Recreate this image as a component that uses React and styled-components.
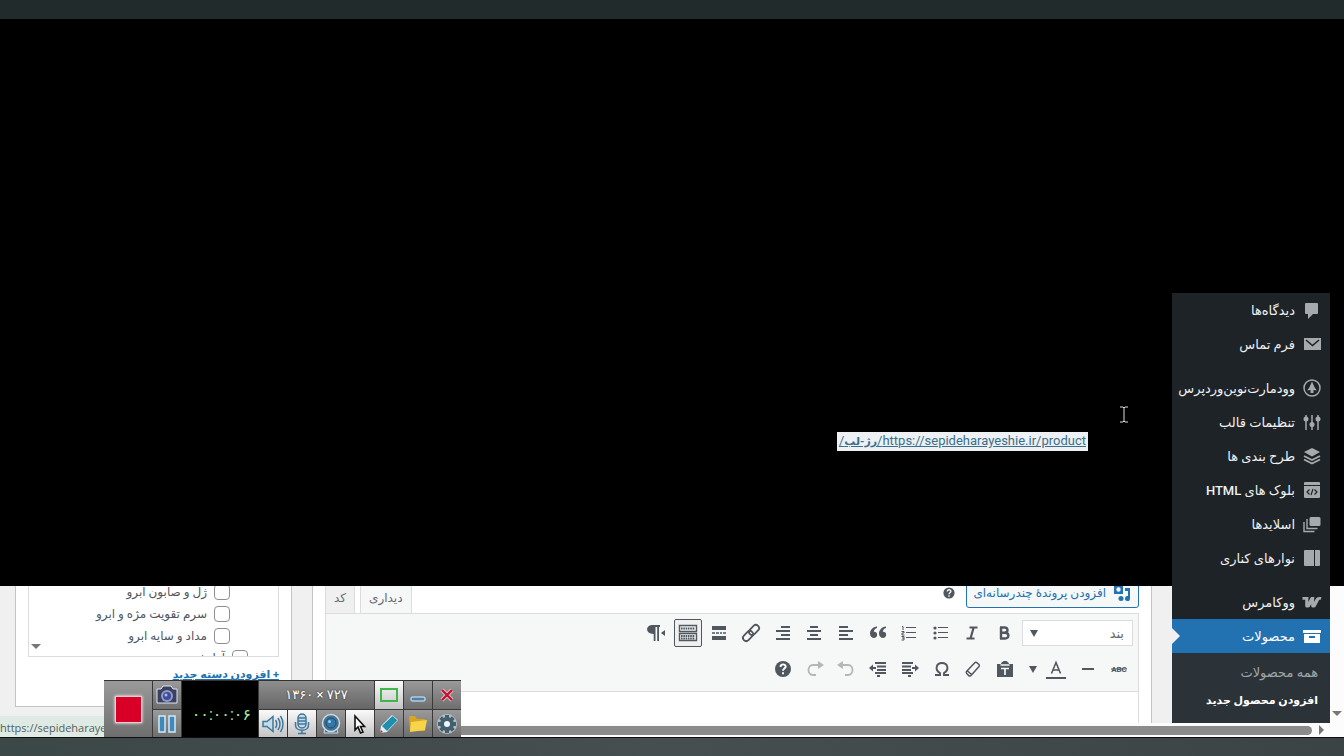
import styled, { createGlobalStyle, css } from 'styled-components';

const GlobalStyle = createGlobalStyle`
      * {
            box-sizing: border-box;
      }
      body {
            margin: 0;
            background: #000;
            font-family: Roboto, 'DejaVu Sans', sans-serif;
            font-size: 13px;
      }
      button, input, select {
            font: inherit;
            margin: 0;
      }
`;

const Desktop = styled.div`
      position: relative;
      direction: rtl;
      display: flex;
      flex-direction: column;
      min-height: 100vh;
      overflow: hidden;
`;

const TopBar = styled.div`
      height: 19px;
      background: #222b2c;
`;

const BottomBar = styled.div`
      height: 19px;
      border-top: 1px solid #0c0f10;
      background: linear-gradient(90deg, #3c4748, #474e4f 50%, #3b4344);
`;

const Screen = styled.div`
      flex: 1;
      display: grid;
      grid-template-columns: 14px 158px minmax(0, 1fr);
`;

const ScrollColumn = styled.div`
      display: flex;
      flex-direction: column;
      justify-content: flex-end;
`;

const ScrollTrack = styled.div`
      display: flex;
      align-items: flex-end;
      justify-content: center;
      height: 137px;
      padding-bottom: 7px;
      background: #fcfcfc;
`;

const Triangle = styled.span`
      border: 5px solid transparent;
      ${({ $side }) =>
            $side === 'right'
                  ? css`
                          border-left-color: #777;
                          border-right-width: 0;
                    `
                  : css`
                          border-top-color: #777;
                          border-bottom-width: 0;
                    `}
`;

const DropArrow = styled.span`
      border: 4px solid transparent;
      border-top: 7px solid #50575e;
      border-bottom-width: 0;
`;

/* admin menu */

const Sidebar = styled.nav`
      align-self: end;
      background: #1d2327;
`;

const MenuLink = styled.a`
      position: relative;
      display: flex;
      align-items: center;
      gap: 7px;
      height: 34px;
      padding-right: 8px;
      color: ${({ $active }) => ($active ? '#fff' : '#f0f0f1')};
      background: ${({ $active }) => ($active ? '#2271b1' : 'transparent')};
      font-size: 13px;
      font-weight: 500;
      text-decoration: none;
      white-space: nowrap;

      svg {
            flex: none;
            color: ${({ $active }) => ($active ? '#fff' : '#a7aaad')};
      }

      ${({ $active }) =>
            $active &&
            css`
                  &::after {
                        content: '';
                        position: absolute;
                        left: 0;
                        top: 9px;
                        border: 8px solid transparent;
                        border-left-color: #f0f0f1;
                        border-right-width: 0;
                  }
            `}
`;

const Separator = styled.div`
      height: 10px;
`;

const SubMenu = styled.div`
      padding: 6px 12px 8px;
      background: #2c3338;
`;

const SubLink = styled.a`
      display: block;
      height: 28px;
      line-height: 28px;
      color: ${({ $current }) => ($current ? '#fff' : '#a0a6aa')};
      font-weight: ${({ $current }) => ($current ? 700 : 400)};
      font-size: ${({ $current }) => ($current ? '11px' : '13px')};
      text-decoration: none;
      white-space: nowrap;
`;

/* page */

const Main = styled.main`
      display: flex;
      flex-direction: column;
      min-width: 0;
`;

const Blank = styled.div`
      position: relative;
      flex: 1;
      display: flex;
      align-items: flex-end;
      padding: 0 84px 135px;
`;

const Permalink = styled.a`
      height: 19px;
      padding: 0 2px;
      background: #eef1f3;
      color: #3c6e8c;
      line-height: 18px;
      white-space: nowrap;

      b {
            font-size: 11px;
      }
`;

const TextCursor = styled.svg`
      position: absolute;
      right: 44px;
      bottom: 163px;
`;

const PageStrip = styled.div`
      display: flex;
      gap: 20px;
      height: 137px;
      padding: 0 20px 0 15px;
      overflow: hidden;
      background: #f0f0f1;
`;

const EditorBox = styled.section`
      flex: 1;
      min-width: 0;
      padding: 0 12px;
      border: solid #c3c4c7;
      border-width: 0 1px;
      background: #fff;
`;

const EditorTools = styled.div`
      display: flex;
      align-items: flex-end;
      gap: 10px;
      height: 27px;
      overflow: hidden;
`;

const MediaButton = styled.button`
      display: flex;
      flex: none;
      align-items: center;
      gap: 6px;
      height: 30px;
      margin-bottom: 5px;
      padding: 0 6px;
      border: 1px solid #2271b1;
      border-radius: 3px;
      background: #f6f7f7;
      color: #2271b1;
      font-size: 12px;
      white-space: nowrap;
`;

const HelpMark = styled.span`
      display: flex;
      height: 30px;
      align-items: center;
      margin-bottom: 5px;
      color: #50575e;
`;

const Tabs = styled.div`
      display: flex;
      align-items: flex-end;
      gap: 5px;
      margin-right: auto;
`;

const Tab = styled.button`
      height: 32px;
      padding: 0 8px;
      border: solid #dcdcde;
      border-width: 1px 1px 0;
      background: ${({ $selected }) => ($selected ? '#f6f7f7' : '#f0f0f1')};
      color: #646970;
      font-size: 12px;
      white-space: nowrap;
`;

const Editor = styled.div`
      height: 110px;
      border: solid #dcdcde;
      border-width: 1px 1px 0;
      background: #fff;
`;

const Toolbar = styled.div`
      display: flex;
      flex-direction: column;
      gap: 8px;
      padding: 5px 5px 8px;
      border-bottom: 1px solid #dcdcde;
      background: #f6f7f7;
`;

const ToolRow = styled.div`
      display: flex;
      align-items: center;
      gap: ${({ $gap }) => $gap}px;
      height: 28px;
`;

const ToolGroup = styled.div`
      display: flex;
      justify-content: space-between;
      width: ${({ $width }) => $width}px;
`;

const ToolButton = styled.button`
      display: flex;
      align-items: center;
      justify-content: center;
      width: 28px;
      height: 28px;
      padding: 0;
      border: 1px solid ${({ $pressed }) => ($pressed ? '#50575e' : 'transparent')};
      border-radius: 2px;
      background: ${({ $pressed }) => ($pressed ? '#f0f0f1' : 'transparent')};
      color: ${({ $faded }) => ($faded ? '#b4b6b8' : '#50575e')};
`;

const SplitArrow = styled.button`
      display: flex;
      align-items: center;
      width: 21px;
      height: 28px;
      padding: 0 4px 0 0;
      border: 0;
      background: transparent;
`;

const FormatBox = styled.div`
      position: relative;
      width: 111px;
`;

const FormatSelect = styled.select`
      appearance: none;
      width: 100%;
      height: 26px;
      padding: 0 8px;
      border: 1px solid #dcdcde;
      border-radius: 0;
      background: #fff;
      color: #646970;
      font-size: 13px;
`;

const FormatArrow = styled.span`
      position: absolute;
      left: 8px;
      top: 10px;
      display: flex;
`;

/* categories */

const CategoryBox = styled.section`
      width: 277px;
      height: 121px;
      padding: 0 12px;
      border: solid #c3c4c7;
      border-width: 0 1px 1px;
      background: #fff;
`;

const CategoryList = styled.div`
      position: relative;
      height: 77px;
      margin-top: -6px;
      border: 1px solid #dcdcde;
      overflow: hidden;
`;

const CategoryLabel = styled.label`
      display: flex;
      align-items: center;
      gap: 7px;
      height: 22px;
      padding-right: ${({ $top }) => ($top ? '30px' : '48px')};
      color: #50575e;
      font-size: 12px;
      white-space: nowrap;
`;

const Checkbox = styled.input`
      appearance: none;
      width: 16px;
      height: 16px;
      border: 1px solid #8c8f94;
      border-radius: 4px;
      background: #fff;
`;

const ListArrow = styled.span`
      position: absolute;
      left: 2px;
      bottom: 7px;
      display: flex;
`;

const AddCategory = styled.a`
      display: block;
      margin-top: 6px;
      color: #2271b1;
      font-size: 11px;
      font-weight: 700;
      line-height: 24px;
`;

const BottomScroll = styled.div`
      display: flex;
      align-items: center;
      gap: 7px;
      height: 14px;
      padding-right: 20px;
      background: #fcfcfc;
`;

const ScrollThumb = styled.div`
      flex: 1;
      height: 9px;
      border-radius: 5px;
      background: #8b8b8b;
`;

const StatusBubble = styled.div`
      position: absolute;
      left: 0;
      bottom: 19px;
      width: 200px;
      height: 21px;
      direction: ltr;
      background: #dfeae5;
      color: #50605c;
      font-family: 'Open Sans', sans-serif;
      font-size: 11px;
      line-height: 23px;
`;

/* screen recorder */

const Recorder = styled.div`
      position: absolute;
      left: 104px;
      bottom: 19px;
      display: grid;
      direction: ltr;
      grid-template-columns: 48px 28px 76px repeat(7, 28px);
      grid-template-rows: 28px 27px;
      gap: 1px;
      border-top: 1px solid #333;
      background: #3a3a3a;
`;

const RecButton = styled.button`
      display: flex;
      align-items: center;
      justify-content: center;
      grid-row: ${({ $tall }) => ($tall ? 'span 2' : 'auto')};
      padding: 0;
      border: 0;
      background: ${({ $light }) =>
            $light ? 'linear-gradient(#fafafa, #c4c4c4)' : 'linear-gradient(#9a9a9a, #6e6e6e)'};
`;

const RecordSquare = styled.span`
      width: 27px;
      height: 27px;
      border: 1px solid #f3c9d0;
      background: #d80027;
      box-shadow: 0 0 3px #fff;
`;

const Timer = styled.div`
      grid-row: span 2;
      padding: 11px 7px 0 0;
      background: #000;
      color: #a5eb9a;
      font-size: 16px;
      line-height: 45px;
      text-align: right;
`;

const SizeLabel = styled.div`
      grid-column: span 4;
      background: linear-gradient(#8e8e8e, #666);
      color: #fff;
      font-size: 13px;
      line-height: 28px;
      text-align: center;
      text-shadow: 0 0 2px #222;
`;

const Icon = ({ size = 20, children }) => (
      <svg width={size} height={size} viewBox="0 0 20 20" fill="currentColor" aria-hidden="true">
            {children}
      </svg>
);

const Lines = ({ d, width = 2 }) => (
      <path d={d} fill="none" stroke="currentColor" strokeWidth={width} />
);

const MENU = [
      {
            text: 'دیدگاه‌ها',
            icon: <path d="M4 3h11q1 0 1 1v9q0 1-1 1h-4l-5 5v-5H4q-1 0-1-1V4q0-1 1-1z" />,
      },
      {
            text: 'فرم تماس',
            icon: (
                  <>
                        <path d="M2 4h17v12H2z" />
                        <path d="M4 6l6.500 5.500L17 6" fill="none" stroke="#1d2327" strokeWidth="1.600" />
                  </>
            ),
      },
      null,
      {
            text: 'وودمارت‌نوین‌وردپرس',
            icon: (
                  <>
                        <circle cx="10" cy="10" r="8" fill="none" stroke="currentColor" strokeWidth="1.500" />
                        <path d="M10 3.500q2 5.500 4.800 9l-3.300-.5v3h-3v-3l-3.300.5Q8 9 10 3.500z" />
                  </>
            ),
      },
      {
            text: 'تنظیمات قالب',
            icon: (
                  <>
                        <Lines d="M4 3v15M10 3v15M16 3v15" width={1.5} />
                        <circle cx="4" cy="7" r="2.500" />
                        <circle cx="10" cy="12.500" r="2.500" />
                        <circle cx="16" cy="7" r="2.500" />
                  </>
            ),
      },
      {
            text: 'طرح بندی ها',
            icon: (
                  <>
                        <path d="M10 2l8 4-8 4.500L2 6z" />
                        <Lines d="M2 10l8 4 8-4M2 13.500l8 4 8-4" width={1.8} />
                  </>
            ),
      },
      {
            text: 'بلوک های HTML',
            icon: (
                  <>
                        <path d="M3 2h14q1 0 1 1v2H2V3q0-1 1-1zM2 6h16v11q0 1-1 1H3q-1 0-1-1z" />
                        <path
                              d="M7.500 9.500L5 12l2.500 2.500M12.500 9.500L15 12l-2.500 2.500M11 9l-2 6"
                              fill="none"
                              stroke="#1d2327"
                              strokeWidth="1.200"
                        />
                  </>
            ),
      },
      {
            text: 'اسلایدها',
            icon: (
                  <>
                        <rect x="7.500" y="3" width="11" height="9" rx="1.500" />
                        <Lines d="M5 5v9.500H15.500M2 8v9.500H12.500" width={1.4} />
                  </>
            ),
      },
      {
            text: 'نوارهای کناری',
            icon: <path d="M2 3q0-1 1-1h9v16H3q-1 0-1-1zM13 2h4q1 0 1 1v14q0 1-1 1h-4z" />,
      },
      null,
      {
            text: 'ووکامرس',
            icon: (
                  <path
                        d="M.500 5H6.500l-.3 5L9 5h3.300l-.3 5 1.800-3.200Q15 5 17 5h2.500l-.8 2.800h-1.500l-3.500 6.600q-.6 1-1.800 1H10.500q-1.300 0-1.300-1.400V12l-1.300 2.400q-.6 1-1.800 1H4.500q-1.300 0-1.300-1.400V7.800H.500z"
                  />
            ),
      },
      {
            text: 'محصولات',
            active: true,
            icon: <path d="M1 4h18v3H1zM2 8h16v9H2zM7 10v2h6v-2z" fillRule="evenodd" />,
      },
];

const QUESTION = (
      <>
            <circle cx="10" cy="10" r="8" />
            <path
                  d="M7.500 8c0-3.500 5.200-3.300 5.200-.4 0 2-2.700 2-2.700 4.100M10 13.200v2"
                  fill="none"
                  stroke="#fff"
                  strokeWidth="1.900"
            />
      </>
);

const ROW_ONE = [
      {
            name: 'پررنگ',
            icon: (
                  <Lines
                        d="M7 4v12M6 4.500h4.500c4 0 4 5.200 0 5.200H7h4c4.500 0 4.500 5.800 0 5.800H6"
                        width={2.4}
                  />
            ),
      },
      { name: 'کج', icon: <Lines d="M7.500 4.500h8M4.500 15.500h8M11.800 4L8.300 16" width={2.2} /> },
      {
            name: 'فهرست نشانه‌دار',
            icon: (
                  <>
                        <Lines d="M7 4.500h10M7 9.500h10M7 14.500h10" width={1} />
                        <circle cx="4" cy="5" r="1.600" />
                        <circle cx="4" cy="10" r="1.600" />
                        <circle cx="4" cy="15" r="1.600" />
                  </>
            ),
      },
      {
            name: 'فهرست شماره‌دار',
            icon: (
                  <>
                        <Lines d="M7 4.500h10M7 9.500h10M7 14.500h10" width={1} />
                        <Lines d="M3 3.500h1V7M2.500 8.500h2.500v1.500H3v2h2.500M2.500 13.500H5v3.500H2.500M3 15h2" width={1} />
                  </>
            ),
      },
      {
            name: 'نقل قول',
            icon: (
                  <path d="M9 5c-2 .5-3 2-3.200 3.800 1.900-.2 3.400 1 3.400 3 0 4.500-7.200 4.300-7.200-1.300C2 7 4.600 4 9 3.500zM18 5c-2 .5-3 2-3.200 3.800 1.900-.2 3.400 1 3.400 3 0 4.500-7.200 4.300-7.200-1.300C11 7 13.600 4 18 3.500z" />
            ),
      },
      { name: 'چپ‌چین', icon: <Lines d="M3 4h9M3 8h14M3 12h9M3 16h14" /> },
      { name: 'وسط‌چین', icon: <Lines d="M6 4h8M3 8h14M6 12h8M3 16h14" /> },
      { name: 'راست‌چین', icon: <Lines d="M8 4h9M3 8h14M8 12h9M3 16h14" /> },
      {
            name: 'پیوند',
            icon: (
                  <g transform="rotate(-45 10 10)" fill="none" stroke="currentColor" strokeWidth="1.800">
                        <rect x="0" y="6.800" width="11.500" height="6.400" rx="3.200" />
                        <rect x="8.500" y="6.800" width="11.500" height="6.400" rx="3.200" />
                  </g>
            ),
      },
      {
            name: 'ادامه مطلب',
            icon: (
                  <>
                        <path d="M3 3h14v4H3zM3 13h14v4H3z" />
                        <Lines d="M3 10h3M7 10h3M11 10h2M14 10h3" width={1.6} />
                  </>
            ),
      },
      {
            name: 'نوار ابزار',
            pressed: true,
            icon: (
                  <>
                        <path
                              d="M1.500 2.500h17v6h-17zM1.500 10.500h17v7h-17z"
                              fill="none"
                              stroke="currentColor"
                              strokeWidth="1.400"
                        />
                        <path
                              d="M3 5.500h14M3 13h14M3 15.500h14"
                              fill="none"
                              stroke="currentColor"
                              strokeWidth="1.800"
                              strokeDasharray="1.600 .7"
                        />
                  </>
            ),
      },
      {
            name: 'جهت متن',
            icon: (
                  <>
                        <path d="M7 2h7v2h-1v14h-1.800V4H9.500v14H7.700v-7C-1 11-1 2 7 2z" />
                        <path d="M19 7v6l-4-3z" />
                  </>
            ),
      },
];

const ROW_TWO_START = [
      {
            name: 'خط‌خورده',
            icon: (
                  <>
                        <text x="10" y="13" fontSize="8" fontWeight="700" textAnchor="middle">
                              ABC
                        </text>
                        <Lines d="M2 10h16" width={1} />
                  </>
            ),
      },
      { name: 'خط افقی', icon: <Lines d="M4 10h12" /> },
      {
            name: 'رنگ متن',
            icon: (
                  <>
                        <Lines d="M5.500 14.500L10 3.500l4.500 11M7 11h6" width={1.6} />
                        <path d="M0 18h20v2H0z" />
                  </>
            ),
      },
];

const ROW_TWO_END = [
      {
            name: 'چسباندن متن',
            icon: (
                  <>
                        <path d="M2 5h4c0-2 2-2 2.500-3h3c.5 1 2.500 1 2.500 3h4v13H2z" />
                        <path d="M5.500 6h9M6 9.500h8M10 9v7" fill="none" stroke="#f6f7f7" strokeWidth="1.700" />
                  </>
            ),
      },
      {
            name: 'پاک کردن قالب',
            icon: (
                  <Lines
                        d="M3.500 12.500l8-8.500q1-1 2-.5l2.500 2q.8.8 0 2l-8 9q-1 1-2 .3L3.700 14.500q-.8-1-.2-2zM4 11.500l4.500 4"
                        width={1.5}
                  />
            ),
      },
      {
            name: 'نویسه ویژه',
            icon: <Lines d="M3 16h5v-2C2.500 11 4 4 10 4s7.500 7 2 10v2h5" width={1.9} />,
      },
      {
            name: 'کاهش تورفتگی',
            icon: (
                  <>
                        <Lines d="M2 4h11M2 7.500h9M2 11h9M2 14h11M8 17h3" width={1.8} />
                        <path d="M12 8h3V5.500L19 9l-4 3.500V10h-3z" />
                  </>
            ),
      },
      {
            name: 'افزایش تورفتگی',
            icon: (
                  <>
                        <Lines d="M7 4h11M9 7.500h9M9 11h9M7 14h11M9 17h3" width={1.8} />
                        <path d="M8 8H5V5.500L1 9l4 3.500V10h3z" />
                  </>
            ),
      },
      {
            name: 'واگرد',
            faded: true,
            icon: (
                  <>
                        <Lines d="M6 6h6c6 0 6 10 0 10H9" width={1.8} />
                        <path d="M1 6l6-4v8z" />
                  </>
            ),
      },
      {
            name: 'ازنو',
            faded: true,
            icon: (
                  <>
                        <Lines d="M14 6H8c-6 0-6 10 0 10h3" width={1.8} />
                        <path d="M19 6l-6-4v8z" />
                  </>
            ),
      },
      { name: 'راهنما', icon: QUESTION },
];

const CATEGORIES = ['ژل و صابون ابرو', 'سرم تقویت مژه و ابرو', 'مداد و سایه ابرو'];

const RecIcon = ({ children }) => (
      <svg width="24" height="24" viewBox="0 0 24 24" aria-hidden="true">
            {children}
      </svg>
);

const GEAR_TEETH = [0, 45, 90, 135, 180, 225, 270, 315];

const ToolButtons = ({ items }) =>
      items.map(({ name, icon, pressed, faded }) => (
            <ToolButton key={name} aria-label={name} $pressed={pressed} $faded={faded}>
                  <Icon>{icon}</Icon>
            </ToolButton>
      ));

const AdminMenu = () => (
      <Sidebar>
            {MENU.map((item, i) =>
                  item ? (
                        <MenuLink key={i} href="#" $active={item.active}>
                              <Icon>{item.icon}</Icon>
                              {item.text}
                        </MenuLink>
                  ) : (
                        <Separator key={i} />
                  )
            )}
            <SubMenu>
                  <SubLink href="#">همه محصولات</SubLink>
                  <SubLink href="#" $current>
                        افزودن محصول جدید
                  </SubLink>
            </SubMenu>
      </Sidebar>
);

const ContentEditor = () => (
      <EditorBox>
            <EditorTools>
                  <MediaButton>
                        <Icon>
                              <path
                                    d="M2 2h2l1-1h3l1 1h2v9H2zM6.500 4.300a2.200 2.200 0 100 4.400 2.200 2.200 0 000-4.400z"
                                    fillRule="evenodd"
                              />
                              <path d="M13 5h5v10.500a2.500 2.500 0 11-2-2.400V8h-3z" />
                              <circle cx="9" cy="15.500" r="2.500" />
                        </Icon>
                        افزودن پروندهٔ چندرسانه‌ای
                  </MediaButton>
                  <HelpMark>
                        <Icon size={14}>{QUESTION}</Icon>
                  </HelpMark>
                  <Tabs>
                        <Tab $selected>دیداری</Tab>
                        <Tab>کد</Tab>
                  </Tabs>
            </EditorTools>
            <Editor>
                  <Toolbar>
                        <ToolRow $gap={4}>
                              <FormatBox>
                                    <FormatSelect aria-label="قالب">
                                          <option>بند</option>
                                    </FormatSelect>
                                    <FormatArrow>
                                          <DropArrow />
                                    </FormatArrow>
                              </FormatBox>
                              <ToolGroup $width={376}>
                                    <ToolButtons items={ROW_ONE} />
                              </ToolGroup>
                        </ToolRow>
                        <ToolRow $gap={1}>
                              <ToolGroup $width={91}>
                                    <ToolButtons items={ROW_TWO_START} />
                              </ToolGroup>
                              <SplitArrow aria-label="رنگ‌ها">
                                    <DropArrow />
                              </SplitArrow>
                              <ToolGroup $width={250}>
                                    <ToolButtons items={ROW_TWO_END} />
                              </ToolGroup>
                        </ToolRow>
                  </Toolbar>
            </Editor>
      </EditorBox>
);

const Categories = () => (
      <CategoryBox>
            <CategoryList>
                  {CATEGORIES.map((name) => (
                        <CategoryLabel key={name}>
                              <Checkbox type="checkbox" />
                              {name}
                        </CategoryLabel>
                  ))}
                  <CategoryLabel $top>
                        <Checkbox type="checkbox" />
                        آرایش صورت
                  </CategoryLabel>
                  <ListArrow>
                        <Triangle />
                  </ListArrow>
            </CategoryList>
            <AddCategory href="#">+ افزودن دسته جدید</AddCategory>
      </CategoryBox>
);

const RecorderPanel = () => (
      <Recorder>
            <RecButton $tall aria-label="توقف">
                  <RecordSquare />
            </RecButton>
            <RecButton aria-label="عکس">
                  <RecIcon>
                        <path d="M2 6h4l2-3h8l2 3h4v14H2z" fill="#39415f" stroke="#dfe6f2" />
                        <circle cx="12" cy="13" r="6" fill="#8f9bc9" />
                        <circle cx="12" cy="13" r="4" fill="#3f4d9a" />
                        <circle cx="11" cy="12" r="1.500" fill="#aab8ec" />
                  </RecIcon>
            </RecButton>
            <Timer>۰۰:۰۰:۰۶</Timer>
            <SizeLabel>۱۳۶۰ × ۷۲۷</SizeLabel>
            <RecButton $light aria-label="ناحیه">
                  <RecIcon>
                        <path d="M4 6h16v12H4z" fill="none" stroke="#3fb54a" strokeWidth="2" />
                  </RecIcon>
            </RecButton>
            <RecButton aria-label="کوچک کردن">
                  <RecIcon>
                        <rect x="5" y="14" width="14" height="4" rx="2" fill="#4d82ab" stroke="#b3cbdc" strokeWidth="1.500" />
                  </RecIcon>
            </RecButton>
            <RecButton aria-label="بستن">
                  <RecIcon>
                        <path d="M7 7l10 10M17 7L7 17" stroke="#e3c4ca" strokeWidth="4" />
                        <path d="M7 7l10 10M17 7L7 17" stroke="#c4122f" strokeWidth="2.400" />
                  </RecIcon>
            </RecButton>
            <RecButton aria-label="مکث">
                  <RecIcon>
                        <path d="M4 4h6v16H4zM14 4h6v16h-6z" fill="#4089bd" stroke="#d5e8f5" strokeWidth="1.500" />
                  </RecIcon>
            </RecButton>
            <RecButton $light aria-label="صدا">
                  <RecIcon>
                        <path d="M2 9.500h4l6-5v15l-6-5H2z" fill="#c5dcea" stroke="#40779c" strokeWidth="1.500" />
                        <path
                              d="M14.500 8q2.500 4 0 8M17 6q4 6 0 12M19.500 4q5 8 0 16"
                              fill="none"
                              stroke="#40779c"
                              strokeWidth="1.500"
                        />
                  </RecIcon>
            </RecButton>
            <RecButton $light aria-label="میکروفن">
                  <RecIcon>
                        <rect x="8" y="2" width="8" height="14" rx="4" fill="#c5dcea" stroke="#40779c" strokeWidth="1.500" />
                        <path
                              d="M8 6h8M8 9h8M8 12h8M5.500 10v3c0 7 13 7 13 0v-3M12 18v3M8 21.500h8"
                              fill="none"
                              stroke="#40779c"
                              strokeWidth="1.500"
                        />
                  </RecIcon>
            </RecButton>
            <RecButton aria-label="دوربین">
                  <RecIcon>
                        <path d="M6 17l-1 4h14l-1-4z" fill="#44728f" stroke="#c9dcea" />
                        <circle cx="12" cy="11" r="8.500" fill="#47718e" stroke="#c9dcea" strokeWidth="1.500" />
                        <circle cx="12" cy="11" r="5" fill="#3278aa" stroke="#1f4f72" />
                        <circle cx="10.500" cy="9.500" r="1.500" fill="#9ccbe8" />
                  </RecIcon>
            </RecButton>
            <RecButton $light aria-label="نشانگر">
                  <RecIcon>
                        <path
                              d="M7 4v14l3-3 2.500 6 2.500-1-2.500-5.500h4z"
                              fill="#fff"
                              stroke="#111"
                              strokeWidth="1.600"
                        />
                  </RecIcon>
            </RecButton>
            <RecButton aria-label="قلم">
                  <RecIcon>
                        <path d="M15 3l6 5L10 20l-7 1 1-7z" fill="#dff0f5" />
                        <path d="M15.500 4l4.800 4.200L10 19l-5-5z" fill="#1f8fb0" />
                        <path d="M3 21l1-3 2 2z" fill="#b22a2a" />
                  </RecIcon>
            </RecButton>
            <RecButton aria-label="پوشه">
                  <RecIcon>
                        <path d="M3 4h6l2 3h8v12H4z" fill="#d9a520" />
                        <path d="M5 10l16-2-2 10-15 2z" fill="#f7d44a" />
                  </RecIcon>
            </RecButton>
            <RecButton aria-label="تنظیمات">
                  <RecIcon>
                        <circle cx="12" cy="12" r="10" fill="#b4c0c6" />
                        <circle cx="12" cy="12" r="7" fill="#44606e" />
                        {GEAR_TEETH.map((angle) => (
                              <rect
                                    key={angle}
                                    x="10"
                                    y="3"
                                    width="4"
                                    height="5"
                                    fill="#44606e"
                                    transform={`rotate(${angle} 12 12)`}
                              />
                        ))}
                        <circle cx="12" cy="12" r="3" fill="#eef4f7" />
                  </RecIcon>
            </RecButton>
      </Recorder>
);

const App = () => (
      <Desktop lang="fa">
            <GlobalStyle />
            <TopBar />
            <Screen>
                  <ScrollColumn>
                        <ScrollTrack>
                              <Triangle />
                        </ScrollTrack>
                  </ScrollColumn>
                  <AdminMenu />
                  <Main>
                        <Blank>
                              <Permalink href="#">
                                    https://sepideharayeshie.ir/product/<b>رژ-لب</b>/
                              </Permalink>
                              <TextCursor width="8" height="17" viewBox="0 0 8 17">
                                    <path d="M0 1h3l1 1 1-1h3M4 2v13M0 16h3l1-1 1 1h3" fill="none" stroke="#ddd" />
                              </TextCursor>
                        </Blank>
                        <PageStrip>
                              <ContentEditor />
                              <Categories />
                        </PageStrip>
                  </Main>
            </Screen>
            <BottomScroll>
                  <Triangle $side="right" />
                  <ScrollThumb />
            </BottomScroll>
            <BottomBar />
            <StatusBubble>https://sepideharayeshie.ir</StatusBubble>
            <RecorderPanel />
      </Desktop>
);

export default App;
